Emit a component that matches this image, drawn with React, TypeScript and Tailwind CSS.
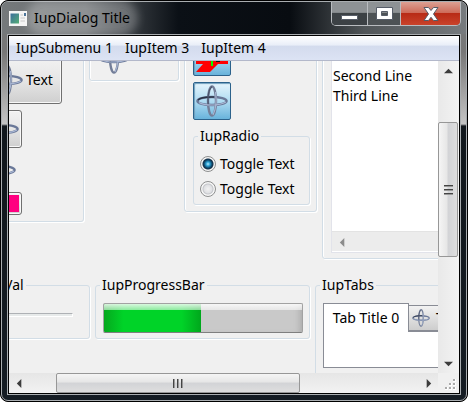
import type { ReactNode } from "react";

function Orb({ size = 32 }: { size?: number }) {
  return (
    <svg width={size} height={size} viewBox="0 0 32 32" fill="none" className="shrink-0" aria-hidden="true">
      <ellipse cx="16" cy="16" rx="14.600" ry="4" stroke="#6a7898" strokeWidth="2.400" />
      <ellipse cx="16" cy="16" rx="4" ry="14.600" stroke="#737e98" strokeWidth="2.400" />
      <path d="M2 15C5 12 12 11.800 18 12" stroke="#2b3346" strokeWidth="1.500" />
      <path d="M12.200 20C11.500 11 13 4 16 1.500" stroke="#4a546c" strokeWidth="1.200" />
      <path d="M3 17.500C9 21 23 21 30 17M19.500 7C20.800 16 20 24 17 30" stroke="#a9b7d4" strokeWidth="1.100" />
    </svg>
  );
}

function RedMark() {
  return (
    <svg width="32" height="32" viewBox="0 0 32 32" className="shrink-0" aria-hidden="true">
      <path d="M5 3H28L24 14H32V23H22L14 31H0L7 23H0V14H5Z" fill="#f00" />
      <path d="M15 12H17V25H15Z" fill="#0f0" />
      <path d="M20 19H24V21H20Z" fill="#111" />
    </svg>
  );
}

const arrowPaths = {
  up: "M0 7L5 2L10 7Z",
  down: "M0 3H10L5 8Z",
  left: "M7 0V10L2 5Z",
  right: "M3 0L8 5L3 10Z",
};

function Arrow({ dir, faded = false }: { dir: keyof typeof arrowPaths; faded?: boolean }) {
  return (
    <button
      type="button"
      aria-label={`Scroll ${dir}`}
      className="flex size-5 shrink-0 items-center justify-center"
    >
      <svg width="9" height="9" viewBox="0 0 10 10">
        <path d={arrowPaths[dir]} fill={faded ? "#8c8c8c" : "#3c3c3c"} />
      </svg>
    </button>
  );
}

function Panel({ className, children }: { className: string; children: ReactNode }) {
  return (
    <section
      className={`flex shrink-0 flex-col justify-end rounded-[3px] border border-[#d2dde6] shadow-[1px_1px_0_#fff,inset_1px_0_0_#fff] ${className}`}
    >
      {children}
    </section>
  );
}

function Group({ title, className, children }: { title: string; className: string; children: ReactNode }) {
  return (
    <fieldset
      className={`shrink-0 rounded-[3px] border border-[#d2dde6] shadow-[1px_1px_0_#fff] ${className}`}
    >
      <legend className="bg-[#f0f0f0] px-0.5 leading-5">{title}</legend>
      {children}
    </fieldset>
  );
}

const raised =
  "flex shrink-0 items-center rounded-[3px] border border-[#707070] bg-linear-to-b from-[#f2f2f2] via-[#e6e6e6] to-[#cfcfcf] shadow-[inset_0_0_0_1px_#f8f8f8]";
const pressed =
  "flex size-[38px] shrink-0 items-center justify-center rounded-[2px] border border-[#2c628b] bg-linear-to-b from-[#e5f4fc] via-[#b0dcf2] to-[#68b3db] shadow-[inset_1px_1px_1px_#6f9fbd]";
const caption = "flex h-full items-center justify-center border-r border-[#b9bcc0] last:border-r-0";

export default function App() {
  return (
    <div className="h-screen bg-white font-['Noto_Sans','Open_Sans',sans-serif] text-[14px] leading-5 text-black">
      <div className="h-full rounded-[8px] border border-black bg-black">
        <div className="flex h-full flex-col rounded-[7px] border border-[#a9adb0] bg-[linear-gradient(180deg,#74787a_0px,#777_50px,#c4c4c4_122px,#11171c_124px,#151c23_100%)] px-[5px] pb-[5px]">
          <header className="-mx-[5px] flex h-8 shrink-0 items-start rounded-t-[6px] bg-[linear-gradient(90deg,#75797b_0%,#696d70_18%,#34393e_28%,#0b1016_38%,#080c11_62%,#505558_78%,#777b7e_100%)] pr-[5px] pl-[7px]">
            <div className="flex h-8 items-center gap-[7px]">
              <svg width="18" height="15" viewBox="0 0 18 15" aria-hidden="true">
                <defs>
                  <linearGradient id="app-screen" x1="0" y1="0" x2="1" y2="1">
                    <stop offset="0" stopColor="#3c6e9d" />
                    <stop offset="1" stopColor="#54ae76" />
                  </linearGradient>
                </defs>
                <path d="M0 0H18V15H0Z" fill="#f5f5f5" />
                <path d="M1.500 2.500H10V12.500H1.500Z" fill="url(#app-screen)" />
                <path d="M11.500 4H14M11.500 7H16M11.500 10H16" stroke="#c8c8c8" />
                <path d="M15 2H17V5H15Z" fill="#3d6a92" />
              </svg>
              <h1 className="rounded-full bg-white/25 shadow-[0_0_8px_8px_rgba(255,255,255,0.25)]">IupDialog Title</h1>
            </div>
            <div className="ml-auto flex h-6 overflow-hidden rounded-b-[5px] border border-t-0 border-[#b9bcc0]">
              <button type="button" aria-label="Minimize" className={`${caption} w-9 bg-linear-to-b from-[#8e9295] from-45% to-[#3c4145] to-50%`}>
                <svg width="17" height="13" viewBox="0 0 17 13">
                  <path d="M.5 8.500H16.500V12.500H.5Z" fill="#fff" stroke="#565c68" />
                </svg>
              </button>
              <button type="button" aria-label="Maximize" className={`${caption} w-[33px] bg-linear-to-b from-[#8e9295] from-45% to-[#4d5255] to-50%`}>
                <svg width="17" height="13" viewBox="0 0 17 13">
                  <path d="M.5 .5H16.500V12.500H.5ZM5.500 4.500V8.500H11.500V4.500Z" fill="#fff" fillRule="evenodd" stroke="#565c68" />
                </svg>
              </button>
              <button type="button" aria-label="Close" className={`${caption} w-[59px] bg-[linear-gradient(180deg,#dca093_0%,#cd6a58_48%,#b82b16_50%,#c9432b_100%)]`}>
                <svg width="16" height="14" viewBox="0 0 16 14">
                  <path d="M1 .5H5.500L8 3.500L10.500 .5H15L10.500 7L15 13.500H10.500L8 10.300L5.500 13.500H1L5.500 7Z" fill="#fff" stroke="#565c68" />
                </svg>
              </button>
            </div>
          </header>

          <main className="flex min-h-0 flex-1 flex-col border border-[#a9adb0] bg-[#f0f0f0]">
            <div className="flex min-h-0 flex-1 flex-col border border-black">
              <nav className="flex h-[25px] shrink-0 items-center gap-3 border-b border-[#b3b8ca] bg-[linear-gradient(180deg,#ffffff_0%,#e9eef8_38%,#d3dbed_42%,#dce3f4_100%)] px-[7px]">
                <button type="button">IupSubmenu 1</button>
                <button type="button">IupItem 3</button>
                <button type="button">IupItem 4</button>
              </nav>

              <div className="flex min-h-0 flex-1">
                <div className="min-w-0 flex-1 overflow-hidden">
                  <div className="-mt-[30px] -ml-[34px] flex flex-col gap-4">
                    <div className="flex items-start gap-[5px]">
                      <Panel className="h-[191px] w-[109px] items-start gap-1.5 pb-1.5 pl-2">
                        <button type="button" className={`${raised} h-12 w-[78px] gap-[3px] pl-1.5`}>
                          <Orb />
                          Text
                        </button>
                        <button type="button" aria-label="Image" className={`${raised} size-[38px] justify-center`}>
                          <Orb />
                        </button>
                        <button type="button" aria-label="Flat image">
                          <Orb />
                        </button>
                        <button type="button" aria-label="Color" className={`${raised} h-[23px] w-[38px] p-[2px]`}>
                          <span className="size-full bg-[#ff0080]" />
                        </button>
                      </Panel>
                      <Panel className="h-[50px] w-[90px] items-start pb-1.5 pl-2">
                        <Orb />
                      </Panel>
                      <Panel className="h-[181px] w-[133px] items-start gap-1.5 pb-1.5 pl-2">
                        <button type="button" aria-label="Red toggle" aria-pressed="true" className={pressed}>
                          <RedMark />
                        </button>
                        <button type="button" aria-label="Image toggle" aria-pressed="true" className={pressed}>
                          <Orb />
                        </button>
                        <Group title="IupRadio" className="h-[79px] w-[117px] px-1">
                          <div className="flex flex-col pt-[5px] pl-0.5">
                            {["a", "b"].map((id) => (
                              <label key={id} className="flex h-[25px] items-center gap-1 whitespace-nowrap">
                                <input
                                  type="radio"
                                  name="toggle"
                                  defaultChecked={id === "a"}
                                  className="size-4 shrink-0 appearance-none rounded-full border border-[#8e8f8f] bg-[radial-gradient(circle,#f2f2f2_0px,#dfe0e3_4px,#c4c6ca_5px,#f6f6f6_6px)] checked:bg-[radial-gradient(circle_at_7px_7px,#b5ecff_0px,#2ba0d2_2px,#0c4468_4px,#163047_5px,#f4f4f4_6px)]"
                                />
                                Toggle Text
                              </label>
                            ))}
                          </div>
                        </Group>
                      </Panel>
                      <Panel className="h-[228px] w-[200px] pr-2 pb-[5px] pl-2">
                        <div className="flex flex-1 flex-col border border-[#e2e3ea] bg-white pb-px">
                          <textarea
                            aria-label="Multiline text"
                            defaultValue={"Second Line\nThird Line"}
                            className="min-h-0 w-full flex-1 resize-none overflow-hidden px-px pt-[33px] leading-5 outline-none"
                          />
                          <div className="flex h-5 border-t border-[#e3e3e3] bg-[#ececec]">
                            <Arrow dir="left" faded />
                          </div>
                        </div>
                      </Panel>
                    </div>

                    <div className="flex items-start gap-[5px]">
                      <Group title="IupVal" className="h-16 w-[115px] px-1">
                        <input
                          type="range"
                          aria-label="IupVal"
                          className="mt-[18px] block h-1 w-[93px] appearance-none border-t border-r border-b border-t-[#aeb1b5] border-r-white border-b-white bg-[#e7eaea] [&::-webkit-slider-thumb]:appearance-none"
                        />
                      </Group>
                      <Group title="IupProgressBar" className="h-16 w-[215px] px-1">
                        <div className="pt-2 pr-0.5 pl-[3px]">
                          <div
                            role="progressbar"
                            aria-label="IupProgressBar"
                            aria-valuenow={49}
                            className="relative h-[30px] overflow-hidden rounded-[2px] border border-[#a2a2a2] border-b-[#7f7f7f] bg-[#c9c9c9] shadow-[inset_-6px_0_6px_-4px_#aaa]"
                          >
                            <div className="h-full w-[49%] bg-[linear-gradient(90deg,#05a81e_0%,#00d328_20%,#00d328_80%,#00a71c_100%)]" />
                            <div className="absolute inset-x-0 top-0 h-1.5 bg-linear-to-b from-white/85 to-white/55" />
                          </div>
                        </div>
                      </Group>
                      <Group title="IupTabs" className="h-[120px] w-[210px] px-1">
                        <div role="tablist" className="mt-2 ml-[3px] flex h-7 items-end">
                          <button
                            type="button"
                            role="tab"
                            aria-selected="true"
                            className="z-10 -mb-px h-[29px] w-[86px] shrink-0 border border-b-0 border-[#898c95] bg-white whitespace-nowrap"
                          >
                            Tab Title 0
                          </button>
                          <button
                            type="button"
                            role="tab"
                            aria-selected="false"
                            className="flex h-[26px] w-[100px] items-center gap-1.5 border border-l-0 border-[#898c95] bg-linear-to-b from-[#f2f2f2] to-[#cdcdcd] pl-[3px] whitespace-nowrap"
                          >
                            <Orb size={18} />
                            Tab Title 1
                          </button>
                        </div>
                        <div role="tabpanel" className="ml-[3px] h-[37px] border border-[#898c95] bg-white" />
                      </Group>
                    </div>
                  </div>
                </div>

                <div className="flex w-[21px] shrink-0 flex-col items-center bg-linear-to-r from-[#e9e9e9] to-[#f3f3f3] pr-px">
                  <Arrow dir="up" />
                  <div className="flex-[41]" />
                  <div className="flex w-full flex-[134] flex-col items-center justify-center gap-[3px] rounded-[2px] border border-[#979797] bg-[linear-gradient(90deg,#f5f5f5_0%,#e6e6e6_45%,#d2d3d6_50%,#dedede_100%)]">
                    <span className="h-px w-[9px] bg-[#444] shadow-[0_1px_0_#999]" />
                    <span className="h-px w-[9px] bg-[#444] shadow-[0_1px_0_#999]" />
                    <span className="h-px w-[9px] bg-[#444] shadow-[0_1px_0_#999]" />
                  </div>
                  <div className="flex-[97]" />
                  <Arrow dir="down" />
                </div>
              </div>

              <div className="flex h-5 shrink-0">
                <div className="flex min-w-0 flex-1 items-center bg-linear-to-b from-[#e6e6e6] to-[#f2f2f2]">
                  <Arrow dir="left" />
                  <div className="flex-[27]" />
                  <div className="flex h-full flex-[244] items-center justify-center gap-[3px] rounded-[2px] border border-[#979797] bg-[linear-gradient(180deg,#f5f5f5_0%,#e6e6e6_45%,#d2d3d6_50%,#dedede_100%)]">
                    <span className="h-[9px] w-px bg-[#444] shadow-[1px_0_0_#999]" />
                    <span className="h-[9px] w-px bg-[#444] shadow-[1px_0_0_#999]" />
                    <span className="h-[9px] w-px bg-[#444] shadow-[1px_0_0_#999]" />
                  </div>
                  <div className="flex-[119]" />
                  <Arrow dir="right" />
                </div>
                <div className="flex w-[21px] items-end justify-end p-[3px]">
                  <svg width="11" height="11" viewBox="0 0 11 11" aria-hidden="true">
                    <path d="M8 0H11V3H8ZM4 4H7V7H4ZM8 4H11V7H8ZM0 8H3V11H0ZM4 8H7V11H4ZM8 8H11V11H8Z" fill="#fff" />
                    <path d="M8 0H10V2H8ZM4 4H6V6H4ZM8 4H10V6H8ZM0 8H2V10H0ZM4 8H6V10H4ZM8 8H10V10H8Z" fill="#aaa" />
                  </svg>
                </div>
              </div>
            </div>
          </main>
        </div>
      </div>
    </div>
  );
}
